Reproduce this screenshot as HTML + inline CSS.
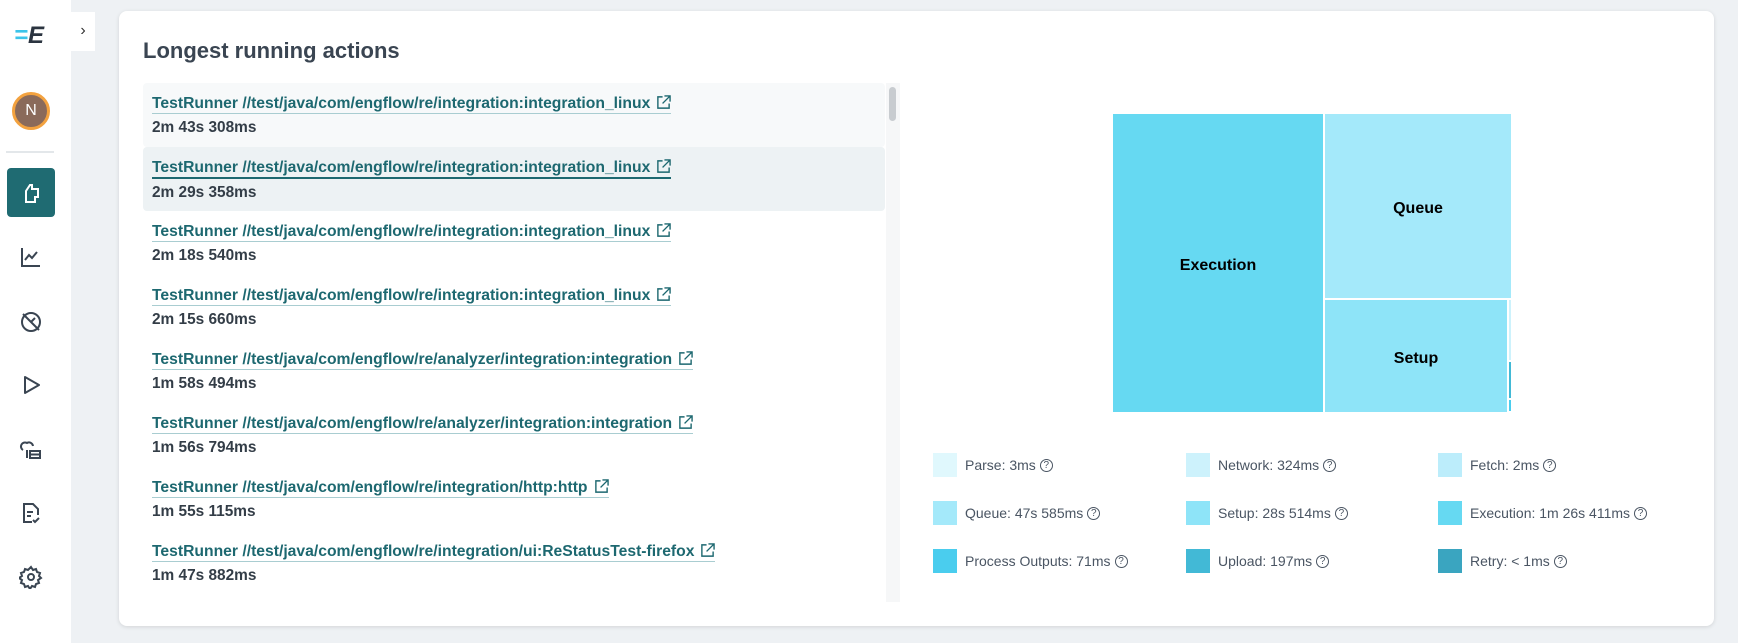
<!DOCTYPE html>
<html><head><meta charset="utf-8"><style>
*{box-sizing:border-box;margin:0;padding:0}
body{width:1738px;height:643px;background:#eef1f4;font-family:"Liberation Sans",sans-serif;position:relative;overflow:hidden}
.side{position:absolute;left:0;top:0;width:71px;height:643px;background:#fff}
.tab{position:absolute;left:71px;top:12px;width:24px;height:39px;background:#fff;color:#333;font-size:16px;text-align:center;line-height:38px}
.ic{position:absolute;left:19px;width:24px;height:24px}
.card{position:absolute;left:119px;top:11px;width:1595px;height:615px;background:#fff;border-radius:8px;box-shadow:0 1px 4px rgba(0,0,0,.12)}
h1{position:absolute;left:143px;top:38px;font-size:22px;font-weight:bold;color:#3a4552}
.list{position:absolute;left:143px;top:83px;width:742px;height:519px;overflow:hidden}
.row{height:64px;padding:11px 9px 0;border-radius:4px}
.row a{display:inline-block;color:#1d6870;font-weight:bold;font-size:15.7px;text-decoration:none;border-bottom:1px solid #a9cdd1;line-height:19px}
.row a svg{vertical-align:-2px;margin-left:6px}
.row div{color:#333d47;font-weight:bold;font-size:15.4px;margin-top:5px}
.sb{position:absolute;left:886px;top:83px;width:14px;height:519px;background:#f6f7f8}
.sb i{position:absolute;left:3px;top:4px;width:7px;height:34px;background:#c8ccd0;border-radius:4px}
.tm{position:absolute;font-weight:bold;font-size:16px;color:#000;display:flex;align-items:center;justify-content:center;padding-top:6px}
.lg{position:absolute;font-size:14px;color:#4a5563;display:flex;align-items:center}
.lg b{display:inline-block;width:24px;height:24px;margin-right:8px}
.lg sup{font-size:10px;border:1.3px solid #4a5563;border-radius:50%;width:13px;height:13px;line-height:11px;text-align:center;display:inline-block;margin-left:4px;vertical-align:6px}
</style></head><body>
<div class="side">
<div style="position:absolute;left:14px;top:22px;font-size:24px;font-weight:bold;font-style:italic;color:#2b3440"><span style="color:#3cc4ea">=</span>E</div>
<div style="position:absolute;left:12px;top:92px;width:38px;height:38px;border-radius:50%;background:#8a6a5a;border:3px solid #f3a23f;color:#fff;font-size:16px;text-align:center;line-height:32px">N</div>
<div style="position:absolute;left:6px;top:151px;width:48px;height:2px;background:#e3e7ea"></div>
<div style="position:absolute;left:7px;top:168px;width:48px;height:49px;background:#1f6b72;border-radius:4px"></div>
<svg class="ic" style="top:181px" viewBox="0 0 24 24" fill="none" stroke="#fff" stroke-width="2"><path d="M7 21V10l4-6h2v4h6v8h-3v5z"/></svg>
<svg class="ic" style="top:245px" viewBox="0 0 24 24" fill="none" stroke="#3a4552" stroke-width="2"><path d="M3 3v18h18M6 15l4-5 3 3 5-6"/></svg>
<svg class="ic" style="top:310px" viewBox="0 0 24 24" fill="none" stroke="#3a4552" stroke-width="2"><circle cx="12" cy="12" r="9"/><path d="M4 4l16 16M12 12l4-4"/></svg>
<svg class="ic" style="top:373px" viewBox="0 0 24 24" fill="none" stroke="#3a4552" stroke-width="2"><path d="M6 4v16l14-8z" stroke-linejoin="round"/></svg>
<svg class="ic" style="top:438px" viewBox="0 0 24 24" fill="none" stroke="#3a4552" stroke-width="2"><path d="M4 12a4 4 0 0 1 4-7 4 4 0 0 1 6 3M8 12v8M11 13h10v7H11zM11 16.5h10"/></svg>
<svg class="ic" style="top:501px" viewBox="0 0 24 24" fill="none" stroke="#3a4552" stroke-width="2"><path d="M13 21H5V3h9l5 5v6M8 11h6M8 15h4M14 19l2 2 4-4"/></svg>
<svg class="ic" style="top:565px" viewBox="0 0 24 24" fill="none" stroke="#3a4552" stroke-width="2"><circle cx="12" cy="12" r="3"/><path d="M12 2l2 3 3-1 1 3 3 1-1 3 2 2-3 2 1 3-3 1-1 3-3-1-2 3-2-3-3 1-1-3-3-1 1-3-3-2 3-2-1-3 3-1 1-3 3 1z"/></svg>
</div>
<div class="tab">›</div>
<div class="card"></div>
<h1>Longest running actions</h1>
<div class="list">
<div class="row" style="background:#f7f9fa"><a>TestRunner //test/java/com/engflow/re/integration:integration_linux<svg width="15" height="15" viewBox="0 0 16 16" fill="none" stroke="#1d6870" stroke-width="1.5"><path d="M7 2H2v12h12V9M9 1h6v6M15 1L7 9"/></svg></a><div>2m 43s 308ms</div></div>
<div class="row" style="background:#edf2f4"><a style="border-bottom:2px solid #1d6870">TestRunner //test/java/com/engflow/re/integration:integration_linux<svg width="15" height="15" viewBox="0 0 16 16" fill="none" stroke="#1d6870" stroke-width="1.5"><path d="M7 2H2v12h12V9M9 1h6v6M15 1L7 9"/></svg></a><div>2m 29s 358ms</div></div>
<div class="row"><a>TestRunner //test/java/com/engflow/re/integration:integration_linux<svg width="15" height="15" viewBox="0 0 16 16" fill="none" stroke="#1d6870" stroke-width="1.5"><path d="M7 2H2v12h12V9M9 1h6v6M15 1L7 9"/></svg></a><div>2m 18s 540ms</div></div>
<div class="row"><a>TestRunner //test/java/com/engflow/re/integration:integration_linux<svg width="15" height="15" viewBox="0 0 16 16" fill="none" stroke="#1d6870" stroke-width="1.5"><path d="M7 2H2v12h12V9M9 1h6v6M15 1L7 9"/></svg></a><div>2m 15s 660ms</div></div>
<div class="row"><a>TestRunner //test/java/com/engflow/re/analyzer/integration:integration<svg width="15" height="15" viewBox="0 0 16 16" fill="none" stroke="#1d6870" stroke-width="1.5"><path d="M7 2H2v12h12V9M9 1h6v6M15 1L7 9"/></svg></a><div>1m 58s 494ms</div></div>
<div class="row"><a>TestRunner //test/java/com/engflow/re/analyzer/integration:integration<svg width="15" height="15" viewBox="0 0 16 16" fill="none" stroke="#1d6870" stroke-width="1.5"><path d="M7 2H2v12h12V9M9 1h6v6M15 1L7 9"/></svg></a><div>1m 56s 794ms</div></div>
<div class="row"><a>TestRunner //test/java/com/engflow/re/integration/http:http<svg width="15" height="15" viewBox="0 0 16 16" fill="none" stroke="#1d6870" stroke-width="1.5"><path d="M7 2H2v12h12V9M9 1h6v6M15 1L7 9"/></svg></a><div>1m 55s 115ms</div></div>
<div class="row"><a>TestRunner //test/java/com/engflow/re/integration/ui:ReStatusTest-firefox<svg width="15" height="15" viewBox="0 0 16 16" fill="none" stroke="#1d6870" stroke-width="1.5"><path d="M7 2H2v12h12V9M9 1h6v6M15 1L7 9"/></svg></a><div>1m 47s 882ms</div></div>
</div>
<div class="sb"><i></i></div>
<div class="tm" style="left:1113px;top:114px;width:210px;height:298px;background:#66d9f2">Execution</div>
<div class="tm" style="left:1325px;top:114px;width:186px;height:184px;background:#a4e9fa">Queue</div>
<div class="tm" style="left:1325px;top:300px;width:182px;height:112px;background:#8ee4f8">Setup</div>
<div style="position:absolute;left:1509px;top:300px;width:2px;height:60px;background:#cdf2fc"></div>
<div style="position:absolute;left:1509px;top:362px;width:2px;height:36px;background:#42b9d6"></div>
<div style="position:absolute;left:1509px;top:400px;width:2px;height:11px;background:#4acdee"></div>
<div class="lg" style="left:933px;top:453px"><b style="background:#e0f8fd"></b>Parse: 3ms<sup>?</sup></div>
<div class="lg" style="left:1186px;top:453px"><b style="background:#cdf2fc"></b>Network: 324ms<sup>?</sup></div>
<div class="lg" style="left:1438px;top:453px"><b style="background:#bcedfb"></b>Fetch: 2ms<sup>?</sup></div>
<div class="lg" style="left:933px;top:501px"><b style="background:#a4e9fa"></b>Queue: 47s 585ms<sup>?</sup></div>
<div class="lg" style="left:1186px;top:501px"><b style="background:#8ee4f8"></b>Setup: 28s 514ms<sup>?</sup></div>
<div class="lg" style="left:1438px;top:501px"><b style="background:#66d9f2"></b>Execution: 1m 26s 411ms<sup>?</sup></div>
<div class="lg" style="left:933px;top:549px"><b style="background:#4acdee"></b>Process Outputs: 71ms<sup>?</sup></div>
<div class="lg" style="left:1186px;top:549px"><b style="background:#42b9d6"></b>Upload: 197ms<sup>?</sup></div>
<div class="lg" style="left:1438px;top:549px"><b style="background:#3aa5c0"></b>Retry: &lt; 1ms<sup>?</sup></div>
</body></html>
